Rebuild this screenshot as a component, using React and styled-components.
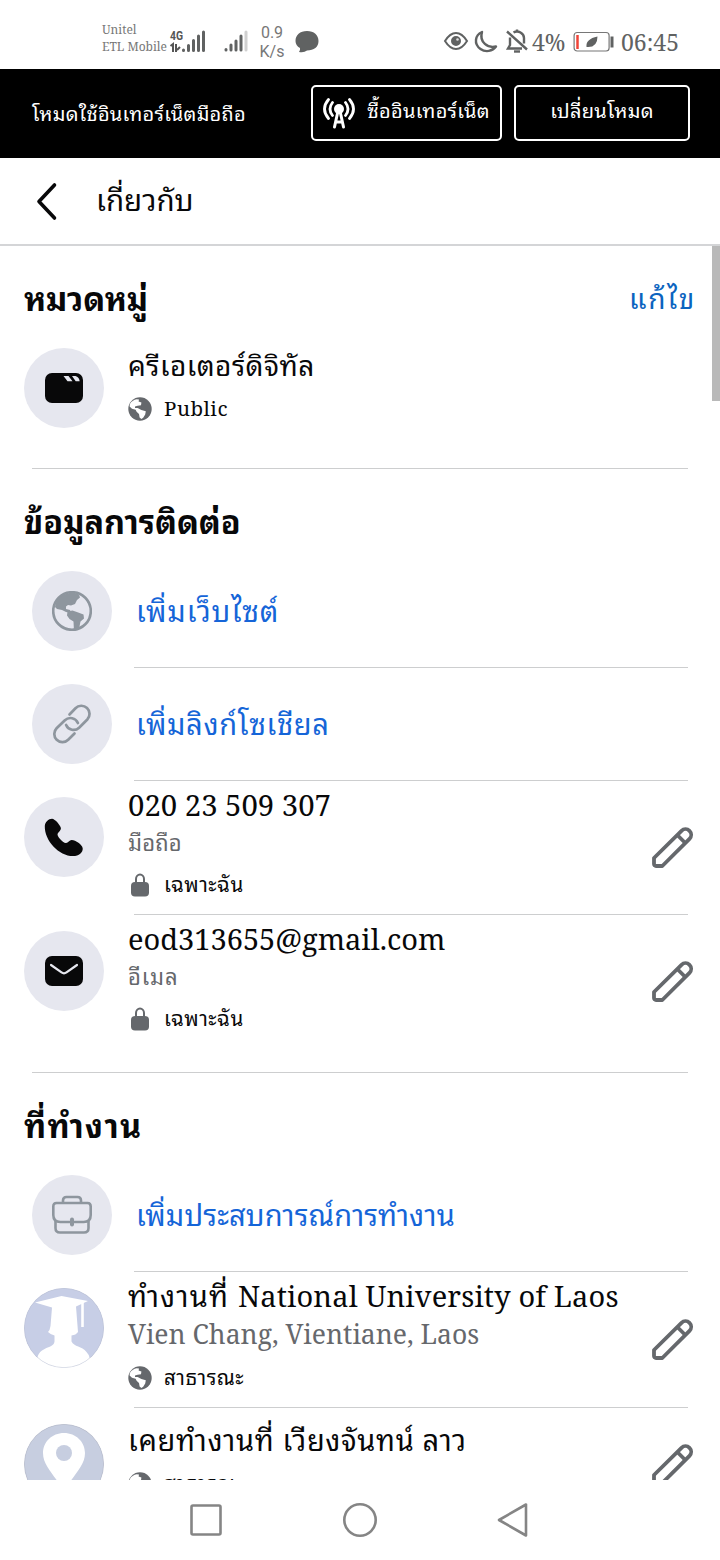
import React from 'react';
import styled, { createGlobalStyle } from 'styled-components';

const GlobalStyle = createGlobalStyle`
  * {
    box-sizing: border-box;
  }

  body {
    margin: 0;
    background: #fff;
    font-family: 'Noto Serif', 'Droid Sans Thai', 'Noto Sans Thai Looped', 'Noto Looped Thai', 'Loma', 'Noto Sans Thai', serif;
    color: #080809;
  }

  svg {
    display: block;
    flex: none;
  }
`;

const Screen = styled.div`
  width: 720px;
  height: 1560px;
  display: flex;
  flex-direction: column;
  overflow: hidden;
  background: #fff;
`;

const StatusBar = styled.div`
  height: 69px;
  display: flex;
  align-items: center;
  justify-content: space-between;
  padding: 15px 39px 0 102px;
  color: #606262;
`;

const StatusGroup = styled.div`
  display: flex;
  align-items: center;
  white-space: nowrap;
`;

const Carriers = styled.div`
  width: 67px;
  font-size: 12px;
  line-height: 17px;
  margin-top: -8px;
  color: #777;
`;

const Speed = styled.div`
  width: 34px;
  font-family: Roboto, sans-serif;
  font-size: 16px;
  line-height: 19px;
  text-align: center;
  color: #777;
`;

const StatusText = styled.span`
  width: ${props => props.$width}px;
  font-size: 23px;
  line-height: 28px;
`;

const ModeBar = styled.div`
  height: 89px;
  display: flex;
  align-items: center;
  padding: 0 30px 2px 32px;
  gap: 12px;
  background: #000;
  color: #fff;
  font-size: 20px;
  line-height: 28px;
  letter-spacing: 0.27px;
  white-space: nowrap;
`;

const ModeLabel = styled.span`
  flex: 1;
  padding-top: 3px;
`;

const ModeButton = styled.button`
  width: ${props => props.$width}px;
  height: 56px;
  display: flex;
  align-items: center;
  justify-content: center;
  gap: 12px;
  padding: 0 0 4px;
  border: 2px solid #fff;
  border-radius: 5px;
  background: none;
  color: inherit;
  font: inherit;
  letter-spacing: inherit;
  white-space: nowrap;

  svg {
    margin-top: 4px;
  }
`;

const Header = styled.header`
  height: 88px;
  display: flex;
  align-items: center;
  gap: 38px;
  padding-left: 35px;
  border-bottom: 2px solid #d4d5d7;
`;

const PageTitle = styled.h1`
  margin: 0;
  font-size: 29.5px;
  font-weight: 400;
  line-height: 38px;
  padding-bottom: 2px;
`;

const Content = styled.main`
  height: 1234px;
  display: flex;
  overflow: hidden;
`;

const Sections = styled.div`
  width: 712px;
  flex: none;
`;

const Scrollbar = styled.div`
  width: 8px;
  height: 155px;
  background: #b9b9b9;
`;

const SectionHead = styled.div`
  height: 102px;
  display: flex;
  align-items: center;
  justify-content: space-between;
  padding: 1px 16px 0 24px;
`;

const SectionTitle = styled.h2`
  margin: 0;
  font-size: 32.4px;
  font-weight: 700;
  line-height: 46px;
  letter-spacing: ${props => props.$spacing || 0}px;
`;

const EditLink = styled.a`
  font-size: 28px;
  line-height: 36px;
  letter-spacing: 1.7px;
  color: #0b64c0;
`;

const Divider = styled.div`
  height: 1px;
  margin: 0 24px 0 ${props => (props.$inset ? 134 : 32)}px;
  background: #cdcecf;
`;

const AddRow = styled.div`
  display: flex;
  align-items: center;
  gap: 24px;
  padding: ${props => (props.$first ? 0 : 16)}px 24px 16px 32px;
  font-size: 29px;
  line-height: 36px;
  letter-spacing: ${props => props.$spacing || 0}px;
  color: #1565d8;
`;

const InfoRow = styled.div`
  height: ${props => props.$height}px;
  display: flex;
  padding: 0 18px 0 24px;
  margin-bottom: ${props => props.$after || 0}px;
`;

const Badge = styled.div`
  width: 80px;
  height: 80px;
  flex: none;
  display: flex;
  align-items: center;
  justify-content: center;
  margin-top: ${props => props.$top || 0}px;
  border-radius: 50%;
  overflow: hidden;
  background: #e6e7ef;
`;

const Details = styled.div`
  flex: 1;
  margin-top: ${props => props.$top}px;
  padding-left: 24px;
  white-space: nowrap;
`;

const Primary = styled.div`
  height: 38px;
  font-size: ${props => props.$size || 29}px;
  line-height: 36px;
  letter-spacing: ${props => props.$spacing || 0}px;
`;

const Spaced = styled.span`
  letter-spacing: 1.2px;
`;

const Secondary = styled.div`
  height: ${props => props.$height || 36}px;
  font-size: ${props => props.$size || 22}px;
  line-height: ${props => (props.$height || 36) - 2}px;
  letter-spacing: ${props => props.$spacing || 0}px;
  color: #66686c;
`;

const Audience = styled.div`
  height: 48px;
  display: flex;
  align-items: center;
  gap: 12px;
  font-size: 20.5px;
  line-height: 24px;
  letter-spacing: 0.5px;
`;

const AudienceLabel = styled.span`
  padding-bottom: 2px;
`;

const EditButton = styled.button`
  align-self: center;
  padding: 0;
  border: 0;
  background: none;
`;

const NavBar = styled.nav`
  height: 80px;
  display: flex;
  align-items: center;
  justify-content: center;
  gap: 118px;
  padding-right: 1px;
`;

const SignalBars = ({ heights, faded }) => (
  <svg width="24" height="26" viewBox="0 0 24 26" stroke="#606262" strokeWidth="3" strokeLinecap="round">
    {heights.map((h, i) => (
      <path key={i} d={`M${2 + i * 5} ${21 - h}V21`} stroke={faded && i === 4 ? '#d0d0d0' : undefined} />
    ))}
  </svg>
);

const MiniGlobe = () => (
  <svg width="24" height="24" viewBox="0 0 24 24">
    <circle cx="12" cy="12" r="11.7" fill="#65686c" />
    <path d="M1.8 7.2C3 4.7 6 2.6 8.6 2.3L11 2.6 10.6 4.4 13.4 5.4 13 8.3 9.6 8.8 7 9.6 7 11 9.6 11 13.4 13 17.8 14.3 17.2 17.6 15.2 20.8 13.4 22 11.6 20.5 11 17 8.6 14.8 7.6 12.8 4 11.7 1.6 9.5z" fill="#fff" />
  </svg>
);

const LargeGlobe = () => (
  <svg width="40" height="40" viewBox="0 0 40 40" fill="#8e969e">
    <circle cx="20" cy="20" r="18.8" fill="none" stroke="#8e969e" strokeWidth="2.6" />
    <path d="M3 16C4 6 14 1 23 2l4 1.5 1 3-3 2.500-2 4-4 1.500-3-.5-2 1.500v2.500l4 1 1 3-5-1-4-2-5-1z" />
    <path d="M15.5 20.5l5-1 5 1.800 6 2.200.5 4-3.500 3-1.500 7.500-5 2.500-.5-10-4-2.500-2.500-3.500z" />
  </svg>
);

const Lock = () => (
  <svg width="24" height="24" viewBox="0 0 24 24">
    <path d="M8 11V6a4 4.500 0 0 1 8 0v5" fill="none" stroke="#65686c" strokeWidth="2" />
    <rect x="3" y="9" width="18" height="14.500" rx="4" fill="#65686c" />
  </svg>
);

const Pencil = () => (
  <svg width="43" height="42" viewBox="0 0 43 42" fill="none" stroke="#65686c" strokeWidth="3.8" strokeLinejoin="round">
    <path d="M3 37v-6L30.500 3.800a5.600 5.600 0 0 1 8 8L11.300 39H5a2 2 0 0 1-2-2z" />
    <path d="M26.300 8l8 8" />
  </svg>
);

const Clapper = () => (
  <svg width="40" height="32" viewBox="0 0 40 32">
    <rect x="1" y="1" width="38" height="30" rx="7" fill="#080809" />
    <path d="M19.500 4h5l4 5.200h-5zM28 4h3.500q3.500 1 4.200 5.200h-4z" fill="#e6e7ef" />
  </svg>
);

const Chain = () => (
  <svg width="40" height="40" viewBox="0 0 40 40" fill="none" stroke="#8e969e" strokeWidth="2.700" strokeLinecap="round">
    <path d="M17.500 10.500l6-6.200a8.100 8.100 0 0 1 11.800 11.200l-8.200 8.200a8.100 8.100 0 0 1-13-2.700" />
    <path d="M22.500 29.500l-6.300 6.200A8.100 8.100 0 0 1 4.600 24.300l8.300-8.100a8.100 8.100 0 0 1 13 2.800" />
  </svg>
);

const Phone = () => (
  <svg width="40" height="40" viewBox="0 0 40 40">
    <path d="M.8 9C1 5 4.500 1.800 8 1.700c3 0 8.800 7 8.900 9.500.1 2.600-3.700 4.300-3.300 6.700.4 2.500 5.500 7.600 8 8.100 2.400.5 3.600-2.700 6-2.900 3.600-.2 10.700 4.700 11.100 8.100.4 4-3.700 7.900-9.700 7.900C15 39.100.3 23.500.8 9z" fill="#080809" />
  </svg>
);

const Mail = () => (
  <svg width="40" height="32" viewBox="0 0 40 32">
    <rect x="1" y="1" width="38" height="30" rx="7" fill="#080809" />
    <path d="M7 10l10.500 7.400q2.500 1.800 5 0L33 10" fill="none" stroke="#e6e7ef" strokeWidth="2.200" strokeLinecap="round" />
  </svg>
);

const Briefcase = () => (
  <svg width="40" height="40" viewBox="0 0 40 40" fill="none" stroke="#8e969e" strokeWidth="2.600">
    <path d="M11 8V5.500Q11 2 14.500 2h11Q29 2 29 5.500V8" />
    <path d="M4.500 8h31q3.200 0 3.200 3.500V20q0 7-7 7H8.300q-7 0-7-7v-8.500Q1.300 8 4.500 8z" />
    <path d="M3.500 25v8q0 4.500 4.500 4.500h24q4.500 0 4.500-4.500v-8" />
    <path d="M20 24.500v5" strokeWidth="4" strokeLinecap="round" />
  </svg>
);

const Graduate = () => (
  <svg width="80" height="80" viewBox="0 0 80 80">
    <circle cx="40" cy="40" r="40" fill="#c7cee6" />
    <path d="M11 14.500L37.500 8 64 13l-12 5.500 2 25.500q-2 3-6.500 3.500v6C50 59 58 58 62.500 64q3 3 3.500 7L40 80 13 71q1-6 5-8.500c6-4 12-4 12.500-9v-6q-4-1-6.500-3.500 2-2 2.500-6L28 19.500z" fill="#fff" />
    <path d="M13 70q26 7 53 0l-8 10H22z" fill="#fff" />
    <path d="M58.500 14v25" stroke="#fff" strokeWidth="2.600" />
    <circle cx="40" cy="40" r="39.700" fill="none" stroke="#b9bfd2" strokeWidth=".6" />
  </svg>
);

const Pin = () => (
  <svg width="80" height="80" viewBox="0 0 80 80">
    <circle cx="40" cy="40" r="39.700" fill="#c7cee0" stroke="#a9afbd" strokeWidth=".6" />
    <path d="M40 9c-12 0-21 9-21 20 0 14 14 24 21 39 7-15 21-25 21-39C61 18 52 9 40 9z" fill="#fff" />
    <circle cx="40" cy="29" r="8" fill="#c7cee0" />
  </svg>
);

const Antenna = () => (
  <svg width="32" height="32" viewBox="0 0 32 32" fill="none" stroke="#fff" strokeWidth="2.800" strokeLinecap="round">
    <circle cx="16" cy="12" r="5" fill="#fff" stroke="none" />
    <path d="M15 14l-3.500 16M17 14l3.500 16M13 25h6" strokeWidth="3" />
    <path d="M9.500 5.500q-5 6.500 0 13M22.500 5.500q5 6.500 0 13M5.500 2.500q-8 9.500 0 19M26.500 2.500q8 9.500 0 19" />
  </svg>
);

const StatusLeft = () => (
  <StatusGroup>
    <Carriers>
      Unitel
      <br />
      ETL Mobile
    </Carriers>
    <svg width="39" height="26" viewBox="0 0 39 26">
      <text x="1" y="11" fontFamily="Roboto" fontSize="13" fontWeight="700" fill="#555" textLength="13" lengthAdjust="spacingAndGlyphs">4G</text>
      <path d="M1.500 17L4 15v8M7 15v8M8 21l3-3" stroke="#555" strokeWidth="2" fill="none" />
      <path d="M14.500 21v.5M19.500 16.500v5M24.500 11.500v10M29.500 7v14.500M34.500 3v18.500" stroke="#606262" strokeWidth="3" strokeLinecap="round" />
    </svg>
    <svg width="16" height="1" />
    <SignalBars heights={[0.5, 5, 9, 14, 18]} faded />
    <svg width="7" height="1" />
    <Speed>
      0.9
      <br />
      K/s
    </Speed>
    <svg width="30" height="24" viewBox="-5 0 30 24">
      <path d="M13 1C20 1 24.500 5 24.500 11S20 20.500 13 20.500q-3 2.500-8 1.500 1.500-1.500 1-4Q1.500 15.500 1.500 11C1.500 5 6 1 13 1z" fill="#606262" />
    </svg>
  </StatusGroup>
);

const StatusRight = () => (
  <StatusGroup>
    <svg width="27" height="24" viewBox="0 1 27 24" fill="none" stroke="#606262" strokeWidth="2">
      <path d="M2 12Q7 4 13 4t11 8q-5 8-11 8T2 12z" />
      <circle cx="13" cy="12" r="4" fill="#606262" />
      <circle cx="14.500" cy="10.500" r="1.300" fill="#ddd" stroke="none" />
    </svg>
    <svg width="34" height="26" viewBox="-2 1 34 26" fill="none" stroke="#606262" strokeWidth="2.400" strokeLinejoin="round">
      <path d="M10 4C3 7 1.500 16 8.500 21c5 3.500 12 2.500 15.500-2.500-8 2-17-4-14-14.500z" />
    </svg>
    <svg width="28" height="26" viewBox="0 1 28 26" fill="none" stroke="#606262" strokeWidth="2.400">
      <path d="M3 3.500l20 18M6 9.500V17l-2 3.500h14M9.500 4.500q3.500-2 7 0t3.500 5.500v5.500M13 1.500v3" />
      <path d="M10 23.500h6" />
    </svg>
    <StatusText $width={41}>4%</StatusText>
    <svg width="48" height="22" viewBox="0.500 0 48 22">
      <rect x="1.600" y="1.500" width="35" height="18.500" rx="3" fill="none" stroke="#777" strokeWidth="1.200" />
      <path d="M5 4v14" stroke="#f04438" strokeWidth="2.500" />
      <path d="M14 16q-1-8 11-10.500Q25 17 14 16zM12.500 17.500l5-5" fill="#606262" />
      <path d="M39.500 5.500v11" stroke="#606262" strokeWidth="3" />
    </svg>
    <StatusText $width={60}>06:45</StatusText>
  </StatusGroup>
);

const App = () => (
  <>
    <GlobalStyle />
    <Screen>
      <StatusBar>
        <StatusLeft />
        <StatusRight />
      </StatusBar>

      <ModeBar>
        <ModeLabel>โหมดใช้อินเทอร์เน็ตมือถือ</ModeLabel>
        <ModeButton $width={191}>
          <Antenna />
          ซื้ออินเทอร์เน็ต
        </ModeButton>
        <ModeButton $width={176}>เปลี่ยนโหมด</ModeButton>
      </ModeBar>

      <Header>
        <svg width="23" height="40" viewBox="0 0 23 40" fill="none" stroke="#080809" strokeWidth="3.600" strokeLinecap="round" strokeLinejoin="round">
          <path d="M19.500 4L4 20.500 19.500 37" />
        </svg>
        <PageTitle>เกี่ยวกับ</PageTitle>
      </Header>

      <Content>
        <Sections>
          <SectionHead>
            <SectionTitle $spacing={-0.2}>หมวดหมู่</SectionTitle>
            <EditLink>แก้ไข</EditLink>
          </SectionHead>
          <InfoRow $height={120}>
            <Badge><Clapper /></Badge>
            <Details $top={-1}>
              <Primary $size={28} $spacing={0.5}>ครีเอเตอร์ดิจิทัล</Primary>
              <Audience><MiniGlobe /><AudienceLabel>Public</AudienceLabel></Audience>
            </Details>
          </InfoRow>
          <Divider />

          <SectionHead>
            <SectionTitle>ข้อมูลการติดต่อ</SectionTitle>
          </SectionHead>
          <AddRow $first $spacing={0.9}>
            <Badge><LargeGlobe /></Badge>
            เพิ่มเว็บไซต์
          </AddRow>
          <Divider $inset />
          <AddRow $spacing={0.7}>
            <Badge><Chain /></Badge>
            เพิ่มลิงก์โซเชียล
          </AddRow>
          <Divider $inset />
          <InfoRow $height={133}>
            <Badge $top={16}><Phone /></Badge>
            <Details $top={6}>
              <Primary $size={29.3}>020 23 509 307</Primary>
              <Secondary $spacing={0.2}>มือถือ</Secondary>
              <Audience><Lock /><AudienceLabel>เฉพาะฉัน</AudienceLabel></Audience>
            </Details>
            <EditButton><Pencil /></EditButton>
          </InfoRow>
          <Divider $inset />
          <InfoRow $height={133} $after={24}>
            <Badge $top={16}><Mail /></Badge>
            <Details $top={6}>
              <Primary>eod313655@gmail.com</Primary>
              <Secondary $spacing={0.9}>อีเมล</Secondary>
              <Audience><Lock /><AudienceLabel>เฉพาะฉัน</AudienceLabel></Audience>
            </Details>
            <EditButton><Pencil /></EditButton>
          </InfoRow>
          <Divider />

          <SectionHead>
            <SectionTitle $spacing={1.4}>ที่ทำงาน</SectionTitle>
          </SectionHead>
          <AddRow $first $spacing={0.15}>
            <Badge><Briefcase /></Badge>
            เพิ่มประสบการณ์การทำงาน
          </AddRow>
          <Divider $inset />
          <InfoRow $height={135}>
            <Badge $top={16}><Graduate /></Badge>
            <Details $top={6}>
              <Primary $spacing={0.15}><Spaced>ทำงานที่ </Spaced>National University of Laos</Primary>
              <Secondary $height={38} $size={26.5}>Vien Chang, Vientiane, Laos</Secondary>
              <Audience><MiniGlobe /><AudienceLabel>สาธารณะ</AudienceLabel></Audience>
            </Details>
            <EditButton><Pencil /></EditButton>
          </InfoRow>
          <Divider $inset />
          <InfoRow $height={114}>
            <Badge $top={16}><Pin /></Badge>
            <Details $top={14}>
              <Primary $spacing={0.65}>เคยทำงานที่ เวียงจันทน์ ลาว</Primary>
              <Audience><MiniGlobe /><AudienceLabel>สาธารณะ</AudienceLabel></Audience>
            </Details>
            <EditButton><Pencil /></EditButton>
          </InfoRow>
        </Sections>
        <Scrollbar />
      </Content>

      <NavBar>
        <svg width="36" height="36" viewBox="0 0 36 36" fill="none" stroke="#858585" strokeWidth="2.600">
          <rect x="3.500" y="3.500" width="29" height="29" rx="1.500" />
        </svg>
        <svg width="36" height="36" viewBox="0 0 36 36" fill="none" stroke="#858585" strokeWidth="2.600">
          <circle cx="18" cy="18" r="15.700" />
        </svg>
        <svg width="36" height="36" viewBox="0 0 36 36" fill="none" stroke="#858585" strokeWidth="2.600" strokeLinejoin="round">
          <path d="M30 2.500v31L3 18z" />
        </svg>
      </NavBar>
    </Screen>
  </>
);

export default App;
